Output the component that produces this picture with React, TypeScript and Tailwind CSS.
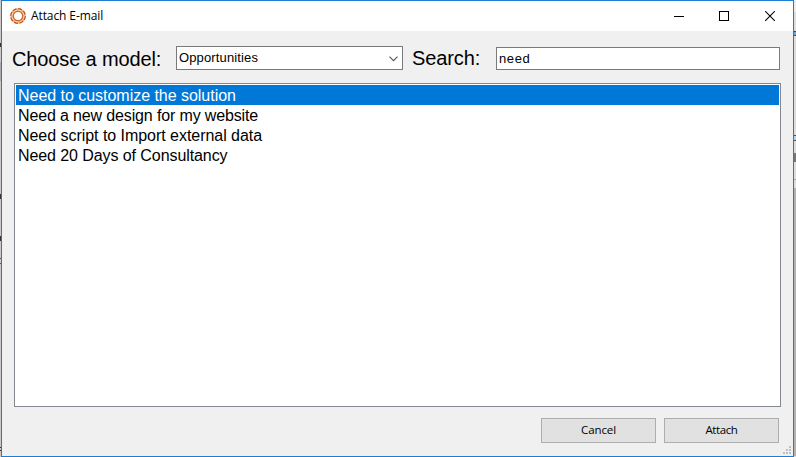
import React from 'react';

const results = [
  { title: 'Need to customize the solution', tracking: 'tracking-[-0.03px]' },
  { title: 'Need a new design for my website', tracking: 'tracking-[-0.14px]' },
  { title: 'Need script to Import external data', tracking: 'tracking-[-0.04px]' },
  { title: 'Need 20 Days of Consultancy', tracking: 'tracking-[-0.08px]' },
];

function AppIcon() {
  return (
    <svg width="16" height="16" viewBox="0 0 16 16" fill="none" className="-mt-px shrink-0">
      <circle cx="8" cy="8" r="6" stroke="#f0b586" strokeWidth="3.6" />
      <circle cx="8" cy="8" r="7.2" stroke="#c4581c" strokeWidth="1.4" strokeDasharray="4 1.65" />
      <circle cx="8" cy="8" r="4.7" stroke="#c9682a" strokeWidth="1.3" />
      <circle cx="8" cy="8" r="6" stroke="#fff3e6" strokeWidth="0.7" strokeDasharray="2.7 2" />
    </svg>
  );
}

function TitleBar() {
  return (
    <header className="flex h-[30px] shrink-0 items-center bg-white pl-2">
      <AppIcon />
      <h1 className="ml-[5px] whitespace-nowrap font-['Open_Sans',sans-serif] text-[12px] leading-4 tracking-[-0.1px]">Attach E-mail</h1>
      <svg width="103" height="11" viewBox="0 0 103 11" className="ml-auto mr-[17px]" fill="none" stroke="#000">
        <path d="M1 5.5h10M46.5 .5h9v9h-9z" shapeRendering="crispEdges" />
        <path d="M92.2 .2l9.6 9.6M101.8 .2l-9.6 9.6" strokeWidth="1.1" />
      </svg>
    </header>
  );
}

function Filters() {
  return (
    <div className="flex h-6 shrink-0">
      <label className="w-[164px] whitespace-nowrap text-[20px] leading-[26px] tracking-[-0.13px]">Choose a model:</label>
      <div className="flex h-6 w-[227px] justify-between border border-[#7a7a7a] bg-white pl-[2px] pr-1 text-[13px] leading-[22px]">
        <span className="tracking-[0.13px]">Opportunities</span>
        <svg width="9" height="6" viewBox="0 0 9 6" className="mt-[9px]" fill="none" stroke="#555">
          <path d="M.5 .7l4 4 4-4" strokeWidth="1.1" />
        </svg>
      </div>
      <label className="ml-[9px] w-[84px] whitespace-nowrap text-[20px] leading-6 tracking-[-0.1px]">Search:</label>
      <input
        aria-label="Search"
        defaultValue="need"
        className="mt-px h-[23px] w-[284px] border border-[#7a7a7a] bg-white px-[2px] pb-px text-[13px] tracking-[0.6px] outline-none"
      />
    </div>
  );
}

function DialogButton({ label, tracking }: { label: string; tracking: string }) {
  return (
    <button className={`h-[25px] w-[115px] border border-[#adadad] bg-[#e1e1e1] pb-px text-center font-['Open_Sans',sans-serif] text-[11.5px] leading-[22px] ${tracking}`}>
      {label}
    </button>
  );
}

function ResizeGrip() {
  return (
    <svg width="8" height="8" viewBox="0 0 8 8" className="mb-[2px] self-end" fill="#bfbfbf" shapeRendering="crispEdges">
      <path d="M6 0h2v2H6zM3 3h2v2H3zM6 3h2v2H6zM0 6h2v2H0zM3 6h2v2H3zM6 6h2v2H6z" />
    </svg>
  );
}

export default function App() {
  return (
    <div className="flex h-[457px] w-[796px] overflow-hidden bg-[#d0d0d0] font-['Liberation_Sans',Arial,sans-serif] text-black">
      <div className="w-px shrink-0 bg-[#c9c9c9]">
        <div className="mt-[43px] h-[4px] bg-[#333]" />
        <div className="mt-[15px] h-[19px] bg-[#aaa]" />
        <div className="mt-[113px] h-[5px] bg-[#333]" />
        <div className="mt-[37px] h-[5px] bg-[#333]" />
        <div className="mt-[17px] h-px bg-[#555]" />
        <div className="mt-[4px] h-px bg-[#555]" />
        <div className="mt-[183px] h-px bg-[#333]" />
        <div className="mt-[2px] h-px bg-[#333]" />
      </div>
      <main className="flex h-[457px] w-[793px] shrink-0 flex-col border border-[#1a7fd4] bg-[#f0f0f0]">
        <TitleBar />
        <section className="flex flex-1 flex-col pl-[10px] pt-[15px]">
          <Filters />
          <ul className="ml-[2px] mt-[13px] h-[324px] w-[767px] shrink-0 border border-[#828790] bg-white p-px text-[16px] leading-[22px]">
            {results.map((item, i) => (
              <li key={item.title} className={`h-5 whitespace-nowrap pl-[2px] ${item.tracking} ${i === 0 ? 'bg-[#0078d7] text-white' : ''}`}>
                {item.title}
              </li>
            ))}
          </ul>
          <footer className="flex flex-1 justify-end gap-2 pr-[2px] pt-[11px]">
            <DialogButton label="Cancel" tracking="tracking-[-0.1px]" />
            <DialogButton label="Attach" tracking="tracking-[-0.4px]" />
            <div className="-ml-[4px] flex"><ResizeGrip /></div>
          </footer>
        </section>
      </main>
      <div className="w-[2px] shrink-0 bg-[#dedede]">
        <div className="h-3 bg-[#eee]" />
        <div className="mt-[19px] h-px bg-[#444]" />
        <div className="h-[3px] bg-[#74a9d7]" />
        <div className="h-px bg-[#444]" />
        <div className="mt-[99px] h-px bg-[#555]" />
        <div className="h-[4px] bg-[#b9d5ec]" />
        <div className="h-px bg-[#555]" />
        <div className="mt-[12px] h-[9px] bg-[#777]" />
        <div className="mt-[17px] h-px bg-[#aaa]" />
        <div className="mt-[8px] h-[268px] bg-[#b2b2b2]" />
      </div>
    </div>
  );
}
